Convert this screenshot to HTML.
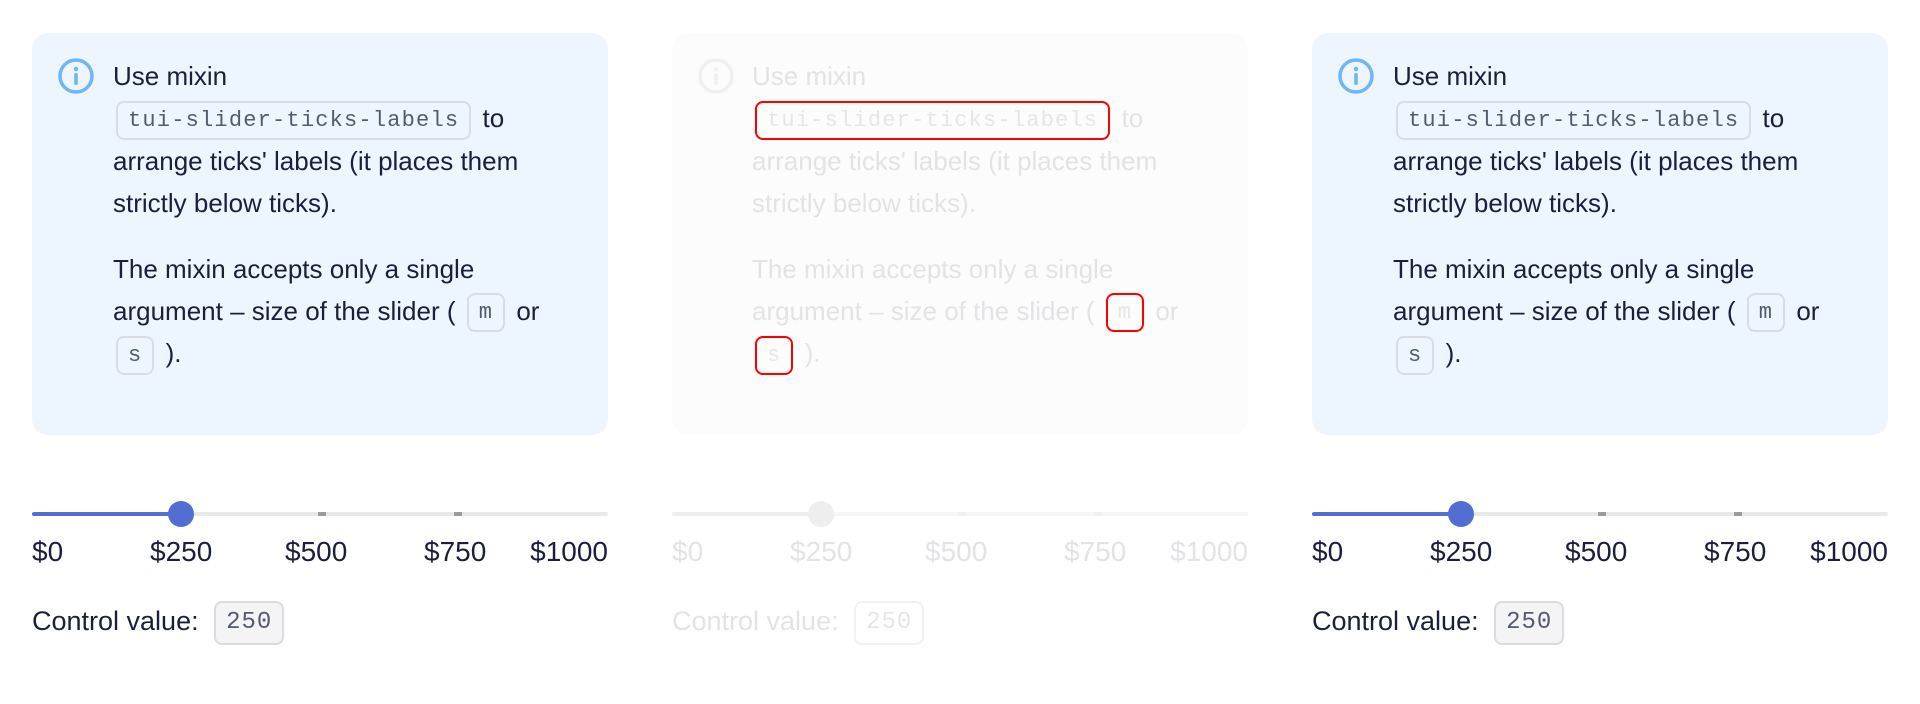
<!DOCTYPE html>
<html><head><meta charset="utf-8"><style>
*{box-sizing:border-box;margin:0;padding:0}
body{width:1920px;height:704px;background:#fff;position:relative;overflow:hidden;font-family:"Liberation Sans",sans-serif;color:#1b1f3b}
.col{position:absolute;top:0;width:576px;height:704px}
.card{position:absolute;left:0;top:33px;width:576px;height:402px;background:#edf5fe;border-radius:16px}
.icon{position:absolute;left:25px;top:57px;width:38px;height:38px}
.txt{position:absolute;left:81px;top:55px;width:470px;font-size:26px;line-height:42px}
.txt p+p{margin-top:24px}
code{display:inline-block;font-family:"Liberation Mono",monospace;font-size:22px;letter-spacing:1.2px;color:#555b6e;border:2px solid #d9dce3;border-radius:8px;padding:0 10px;line-height:35px;vertical-align:middle;margin:0 4px}
.track{position:absolute;left:0;top:512px;width:576px;height:4px;background:#e8e8e8;border-radius:2px}
.fill{position:absolute;left:0;top:512px;width:149px;height:4px;background:#526ed3;border-radius:2px}
.tick{position:absolute;top:512px;width:8px;height:4px;background:#999}
.thumb{position:absolute;left:136px;top:501px;width:26px;height:26px;border-radius:50%;background:#526ed3}
.lab{position:absolute;top:535px;font-size:28px;line-height:34px}
.cv{position:absolute;left:0;top:599px;font-size:27px;line-height:44px}
.cv code{background:#f4f4f5;font-size:24px;letter-spacing:1px;margin-left:8px;padding:0 10px;line-height:40px}
.fade{color:#e3e3e6}
.fade .card{background:#fcfcfc}
.fade code{color:#e6e6e6;border-color:#f00}
.fade .cv code{background:#fff;border-color:#f2f2f2}
.fade .fill{background:#eee}.fade .thumb{background:#eee}.fade .tick{background:#f0f0f0}.fade .track{background:#f6f6f6}
</style></head><body>

<div class="col" style="left:32px">
<div class="card"></div>
<svg class="icon" viewBox="0 0 38 38"><circle cx="19" cy="19" r="16" fill="none" stroke="#70b6f6" stroke-width="3.5"/><circle cx="19" cy="12" r="2.2" fill="#70b6f6"/><rect x="17.2" y="16" width="3.6" height="12" rx="1.8" fill="#70b6f6"/></svg>
<div class="txt"><p>Use mixin<br><code style="margin-left:3px">tui-slider-ticks-labels</code> to arrange ticks' labels (it places them strictly below ticks).</p><p>The mixin accepts only a single argument – size of the slider ( <code>m</code> or <code style="margin-left:3px">s</code> ).</p></div>
<div class="track"></div><div class="fill"></div><div class="tick" style="left:286px"></div><div class="tick" style="left:422px"></div><div class="thumb"></div>
<div class="lab" style="left:0">$0</div><div class="lab" style="left:118px">$250</div><div class="lab" style="left:253px">$500</div><div class="lab" style="left:392px">$750</div><div class="lab" style="right:0">$1000</div>
<div class="cv">Control value: <code>250</code></div>
</div>

<div class="col fade" style="left:672px">
<div class="card"></div>
<svg class="icon" viewBox="0 0 38 38"><circle cx="19" cy="19" r="16" fill="none" stroke="#f0f0f0" stroke-width="3.5"/><circle cx="19" cy="12" r="2.2" fill="#f0f0f0"/><rect x="17.2" y="16" width="3.6" height="12" rx="1.8" fill="#f0f0f0"/></svg>
<div class="txt" style="left:80px"><p>Use mixin<br><code style="margin-left:3px">tui-slider-ticks-labels</code> to arrange ticks' labels (it places them strictly below ticks).</p><p>The mixin accepts only a single argument – size of the slider ( <code>m</code> or <code style="margin-left:3px">s</code> ).</p></div>
<div class="track"></div><div class="fill"></div><div class="tick" style="left:286px"></div><div class="tick" style="left:422px"></div><div class="thumb"></div>
<div class="lab" style="left:0">$0</div><div class="lab" style="left:118px">$250</div><div class="lab" style="left:253px">$500</div><div class="lab" style="left:392px">$750</div><div class="lab" style="right:0">$1000</div>
<div class="cv">Control value: <code>250</code></div>
</div>

<div class="col" style="left:1312px">
<div class="card"></div>
<svg class="icon" viewBox="0 0 38 38"><circle cx="19" cy="19" r="16" fill="none" stroke="#70b6f6" stroke-width="3.5"/><circle cx="19" cy="12" r="2.2" fill="#70b6f6"/><rect x="17.2" y="16" width="3.6" height="12" rx="1.8" fill="#70b6f6"/></svg>
<div class="txt"><p>Use mixin<br><code style="margin-left:3px">tui-slider-ticks-labels</code> to arrange ticks' labels (it places them strictly below ticks).</p><p>The mixin accepts only a single argument – size of the slider ( <code>m</code> or <code style="margin-left:3px">s</code> ).</p></div>
<div class="track"></div><div class="fill"></div><div class="tick" style="left:286px"></div><div class="tick" style="left:422px"></div><div class="thumb"></div>
<div class="lab" style="left:0">$0</div><div class="lab" style="left:118px">$250</div><div class="lab" style="left:253px">$500</div><div class="lab" style="left:392px">$750</div><div class="lab" style="right:0">$1000</div>
<div class="cv">Control value: <code>250</code></div>
</div>
</body></html>
